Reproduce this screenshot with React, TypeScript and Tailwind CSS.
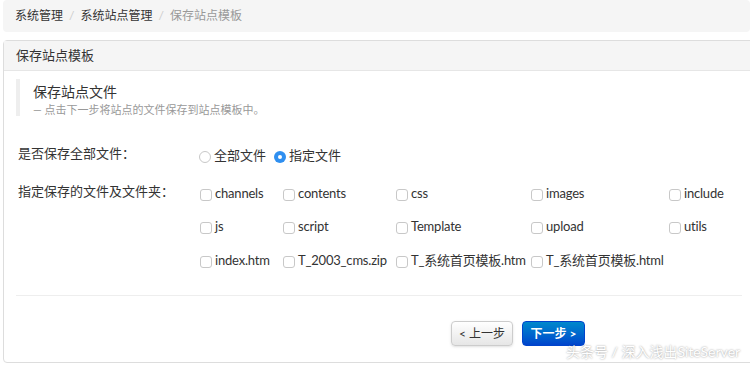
const font = { fontFamily: 'Lato, "Noto Sans CJK SC", sans-serif' };

const files = [
  ['channels', 'contents', 'css', 'images', 'include'],
  ['js', 'script', 'Template', 'upload', 'utils'],
  ['index.htm', 'T_2003_cms.zip', 'T_系统首页模板.htm', 'T_系统首页模板.html'],
];

function Check({ label }: { label: string }) {
  return (
    <label className="flex items-center gap-[3px] text-[13px] text-[#333] whitespace-nowrap tracking-[-0.2px]">
      <span className="w-[12px] h-[12px] rounded-[3px] border border-[#c8c8c8] bg-white shrink-0 mt-[3px]" />
      {label}
    </label>
  );
}

function Radio({ label, checked }: { label: string; checked?: boolean }) {
  return (
    <label className="flex items-center gap-[3px] text-[13px] text-[#333]">
      {checked ? (
        <span className="w-[12px] h-[12px] rounded-full bg-[#2f8ff0] flex items-center justify-center mt-[2px]">
          <span className="w-[4px] h-[4px] rounded-full bg-white" />
        </span>
      ) : (
        <span className="w-[12px] h-[12px] rounded-full border border-[#c8c8c8] bg-white mt-[2px]" />
      )}
      {label}
    </label>
  );
}

export default function App() {
  return (
    <div className="w-[750px] h-[365px] bg-white overflow-hidden relative" style={font}>
      {/* breadcrumb */}
      <div className="ml-[3px] h-[32px] bg-[#f5f5f5] rounded-[4px] flex items-center pl-[12px] text-[12px]">
        <span className="text-[#333]">系统管理</span>
        <span className="text-[#ccc] px-[6px]">/</span>
        <span className="text-[#333]">系统站点管理</span>
        <span className="text-[#ccc] px-[6px]">/</span>
        <span className="text-[#999]">保存站点模板</span>
      </div>

      {/* panel */}
      <div className="ml-[3px] mt-[8px] w-[760px] h-[323px] border border-[#ddd] rounded-[4px] flex flex-col">
        <div className="h-[30px] bg-[#f5f5f5] border-b border-[#e6e6e6] flex items-center pl-[12px] text-[13px] text-[#333]">
          保存站点模板
        </div>

        <div className="pl-[12px] pr-[20px] pt-[8px]">
          <div className="border-l-[4px] border-[#eee] pl-[13px] pt-[4px] h-[37px]">
            <div className="text-[14px] text-[#333] leading-[18px]">保存站点文件</div>
            <div className="text-[11px] text-[#999] leading-[15px] mt-[1px]">— 点击下一步将站点的文件保存到站点模板中。</div>
          </div>

          <div className="flex mt-[25px] items-center pl-[2px]">
            <div className="w-[181px] text-[13px] text-[#333]">是否保存全部文件：</div>
            <div className="flex gap-[8px] mt-[5px]">
              <Radio label="全部文件" />
              <Radio label="指定文件" checked />
            </div>
          </div>

          <div className="flex mt-[16px] pl-[2px]">
            <div className="w-[182px] text-[13px] text-[#333] leading-[18px]">指定保存的文件及文件夹：</div>
            <div className="grid grid-cols-[83px_113px_135px_138px_auto] gap-y-[14px] mt-[2px]">
              {files.flat().map((f) => (
                <Check key={f} label={f} />
              ))}
            </div>
          </div>

          <div className="mt-[25px] border-t border-[#eee]" />

          <div className="flex pl-[435px] gap-[9px] mt-[25px]">
            <button className="w-[62px] h-[25px] rounded-[4px] border border-[#ccc] bg-gradient-to-b from-white to-[#e6e6e6] text-[12px] text-[#333] shadow-sm">
              &lt; 上一步
            </button>
            <button className="w-[63px] h-[25px] rounded-[4px] border border-[#04c] bg-gradient-to-b from-[#0088cc] to-[#0044cc] text-[12px] font-bold text-white">
              下一步 &gt;
            </button>
          </div>
        </div>
      </div>

      <div className="absolute left-[566px] top-[344px] text-[14px] leading-[16px] whitespace-nowrap text-white [text-shadow:0_0_2px_rgba(0,0,0,0.45)]">
        头条号 / 深入浅出SiteServer
      </div>
    </div>
  );
}
